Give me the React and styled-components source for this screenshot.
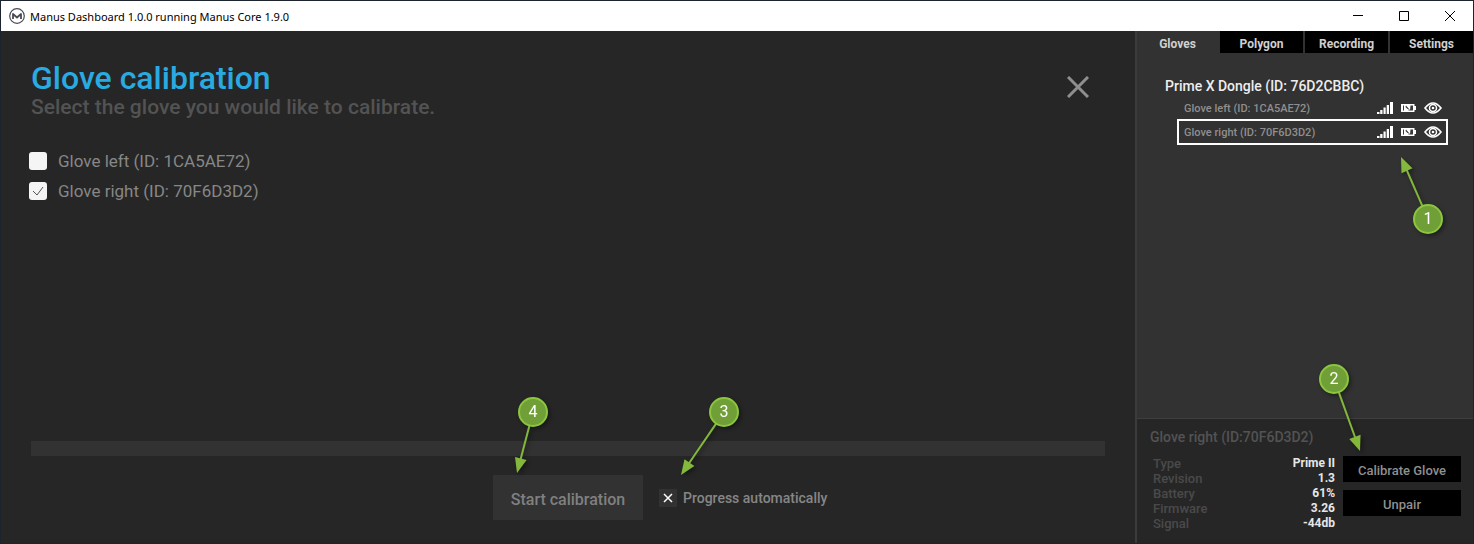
import React, { useState } from 'react'
import styled, { createGlobalStyle } from 'styled-components'

const gloves = [
  { side: 'left', id: '1CA5AE72' },
  { side: 'right', id: '70F6D3D2' },
]

const tabs = ['Gloves', 'Polygon', 'Recording', 'Settings']

const details = [
  ['Type', 'Prime II'],
  ['Revision', '1.3'],
  ['Battery', '61%'],
  ['Firmware', '3.26'],
  ['Signal', '-44db'],
]

const ManusLogo = () => (
  <svg width="16" height="16" viewBox="0 0 16 16" fill="none" stroke="#4a4a55">
    <circle cx="8" cy="8" r="7.3" strokeWidth="1.2" />
    <path d="M4 11V6L8 9.500L12 6V11" strokeWidth="1.800" strokeLinejoin="round" />
  </svg>
)

const SignalIcon = () => (
  <svg width="16" height="12" viewBox="0 0 16 12" fill="#fff">
    <path d="M0 10h2.500v2H0zM3.200 8h2.300v4H3.200zM6.500 5.500h2.200v6.500H6.500zM9.700 3h2.300v9H9.700zM13 0h3v12h-3z" />
  </svg>
)

const BatteryIcon = () => (
  <svg width="15" height="8" viewBox="0 0 15 8">
    <path d="M0 0h13.500v2H15v4h-1.500v2H0z" fill="#fff" />
    <path d="M9.500 1.500H12v5H7.500V5L9 6zM2 1.500h1v5H2zM5 1.500l3 3.500H6.500L4.500 3z" fill="#3a3a3a" />
  </svg>
)

const EyeIcon = () => (
  <svg width="18" height="12" viewBox="0 0 18 12" fill="none" stroke="#fff">
    <path d="M1 6Q9 -4 17 6Q9 16 1 6Z" strokeWidth="1.700" />
    <circle cx="9" cy="6" r="3.500" strokeWidth="1.500" />
    <circle cx="9" cy="6" r="1.300" fill="#fff" stroke="none" />
  </svg>
)

// numbered marker, the arrow goes from the circle to (dx, dy)
const Callout = ({ number, dx, dy, ...place }) => {
  const angle = (Math.atan2(dy, dx) * 180) / Math.PI
  const length = Math.hypot(dx, dy)
  return (
    <CalloutBox {...place}>
      <svg width="30" height="30" viewBox="-15 -15 30 30">
        <g transform={`rotate(${angle})`} fill="#84b83c">
          <path d={`M14 -1H${length - 13}V1H14z`} />
          <path d={`M${length} 0L${length - 15} -6V6z`} />
        </g>
        <circle r="14" fill="#719f37" stroke="#8cc63f" strokeWidth="2" />
      </svg>
      <span>{number}</span>
    </CalloutBox>
  )
}

const App = () => {
  const [tab, setTab] = useState('Gloves')
  const [picked, setPicked] = useState('right')
  const [auto, setAuto] = useState(true)

  return (
    <Window>
      <GlobalStyle />
      {/* title bar */}
      <TitleBar>
        <ManusLogo />
        <WindowTitle>Manus Dashboard 1.0.0 running Manus Core 1.9.0</WindowTitle>
        <WindowButton aria-label="Minimize">
          <svg width="10" height="10" stroke="#000"><path d="M0 4.500H10" /></svg>
        </WindowButton>
        <WindowButton aria-label="Maximize">
          <svg width="10" height="10" fill="none" stroke="#000"><path d="M.5 .5h9v9h-9z" /></svg>
        </WindowButton>
        <WindowButton aria-label="Close">
          <svg width="10" height="10" stroke="#000"><path d="M0 0L10 10M10 0L0 10" /></svg>
        </WindowButton>
      </TitleBar>

      <Body>
        {/* calibration */}
        <Main>
          <Header>
            <div>
              <Title>Glove calibration</Title>
              <SubTitle>Select the glove you would like to calibrate.</SubTitle>
            </div>
            <CloseButton aria-label="Close calibration">
              <svg width="22" height="22" stroke="#8f8f8f" strokeWidth="3"><path d="M1 1L21 21M21 1L1 21" /></svg>
            </CloseButton>
          </Header>
          <GloveChoices>
            {gloves.map((glove) => (
              <ChoiceLabel key={glove.id}>
                <CheckHolder>
                  <ChoiceBox
                    type="checkbox"
                    checked={picked === glove.side}
                    onChange={() => setPicked(glove.side)}
                  />
                  <svg width="18" height="18" fill="none" stroke="#555"><path d="M4 9L8 13L14 5" /></svg>
                </CheckHolder>
                Glove {glove.side} (ID: {glove.id})
              </ChoiceLabel>
            ))}
          </GloveChoices>
          <ProgressTrack />
          <Actions>
            <StartHolder>
              <StartButton>Start calibration</StartButton>
              <Callout number="4" left="25px" top="-78px" dx={-16} dy={61} />
            </StartHolder>
            <AutoLabel>
              <CheckHolder>
                <AutoBox type="checkbox" checked={auto} onChange={() => setAuto(!auto)} />
                <svg width="18" height="18" stroke="#fff" strokeWidth="1.500"><path d="M5 5L13 13M13 5L5 13" /></svg>
              </CheckHolder>
              Progress automatically
              <Callout number="3" left="50px" top="-92px" dx={-43} dy={63} />
            </AutoLabel>
          </Actions>
        </Main>

        {/* side panel */}
        <Side>
          <Tabs>
            {tabs.map((name) => (
              <Tab key={name} $active={tab === name} onClick={() => setTab(name)}>{name}</Tab>
            ))}
          </Tabs>
          <Devices>
            <DongleName>Prime X Dongle (ID: 76D2CBBC)</DongleName>
            {gloves.map((glove) => (
              <GloveRow key={glove.id} $selected={glove.side === 'right'}>
                <GloveName>Glove {glove.side} (ID: {glove.id})</GloveName>
                <SignalIcon />
                <BatteryIcon />
                <EyeIcon />
                {glove.side === 'right' && <Callout number="1" right="3px" top="83px" dx={-27} dy={-62} />}
              </GloveRow>
            ))}
          </Devices>
          <Details>
            <DetailsTitle>Glove right (ID:70F6D3D2)</DetailsTitle>
            <DetailsContent>
              <DetailsTable>
                <tbody>
                  {details.map(([name, value]) => (
                    <tr key={name}>
                      <th scope="row">{name}</th>
                      <td>{value}</td>
                    </tr>
                  ))}
                </tbody>
              </DetailsTable>
              <DetailsButtons>
                <SideButton>Calibrate Glove</SideButton>
                <SideButton>Unpair</SideButton>
                <Callout number="2" left="-24px" top="-92px" dx={26} dy={72} />
              </DetailsButtons>
            </DetailsContent>
          </Details>
        </Side>
      </Body>
    </Window>
  )
}

export default App

const GlobalStyle = createGlobalStyle`
* {
  box-sizing: border-box;
}
body {
  margin: 0;
  background: #262626;
  font-family: Roboto, sans-serif;
}
button {
  border: none;
  padding: 0;
  font-family: inherit;
}
svg {
  display: block;
  flex-shrink: 0;
}
`
const Window = styled.div`
display: flex;
flex-direction: column;
min-height: 100vh;
border: 1px solid #1c2430;
`
const TitleBar = styled.header`
display: flex;
align-items: center;
height: 30px;
padding-left: 8px;
background: #fff;
`
const WindowTitle = styled.span`
flex: 1;
margin-left: 5px;
font-family: "Noto Sans", sans-serif;
font-size: 11px;
color: #000;
`
const WindowButton = styled.button`
display: grid;
place-items: center;
width: 46px;
height: 30px;
background: none;
`
const Body = styled.div`
flex: 1;
display: flex;
`
const Main = styled.main`
flex: 1;
display: flex;
flex-direction: column;
padding: 30px 30px 23px;
background: #262626;
`
const Header = styled.div`
display: flex;
justify-content: space-between;
align-items: flex-start;
`
const Title = styled.h1`
margin: 0;
font-size: 32px;
line-height: 34px;
font-weight: 500;
color: #29abe2;
`
const SubTitle = styled.p`
margin: 0;
font-size: 21px;
line-height: 24px;
font-weight: 500;
color: #535353;
`
const CloseButton = styled.button`
margin: 15px 16px 0 0;
background: none;
`
const GloveChoices = styled.div`
flex: 1;
display: flex;
flex-direction: column;
gap: 12px;
padding: 33px 0;
`
const ChoiceLabel = styled.label`
display: flex;
align-items: center;
gap: 11px;
height: 18px;
margin-left: -2px;
font-size: 17px;
color: #878787;
`
const CheckHolder = styled.span`
position: relative;
display: flex;
svg {
  position: absolute;
  inset: 0;
  pointer-events: none;
}
input:not(:checked) + svg {
  display: none;
}
`
const CheckInput = styled.input`
appearance: none;
width: 18px;
height: 18px;
margin: 0;
`
const ChoiceBox = styled(CheckInput)`
border-radius: 3px;
background: #f5f5f5;
`
const AutoBox = styled(CheckInput)`
background: #323232;
`
const ProgressTrack = styled.div`
height: 15px;
margin-bottom: 19px;
background: #323232;
`
const Actions = styled.div`
display: grid;
grid-template-columns: 1fr 150px 1fr;
column-gap: 16px;
align-items: center;
`
const StartHolder = styled.div`
position: relative;
grid-column: 2;
`
const StartButton = styled.button`
width: 100%;
height: 45px;
padding-top: 3px;
background: #323232;
font-size: 16px;
font-weight: 500;
color: #808080;
`
const AutoLabel = styled.label`
position: relative;
display: flex;
align-items: center;
gap: 6px;
font-size: 14px;
font-weight: 500;
color: #868686;
`
const Side = styled.aside`
display: flex;
flex-direction: column;
width: 338px;
border-left: 2px solid #3b3b3b;
background: #323232;
`
const Tabs = styled.nav`
display: grid;
grid-template-columns: 81fr 83fr 83fr 83fr;
gap: 2px;
`
const Tab = styled.button`
height: 22px;
padding-top: 3px;
background: ${({ $active }) => ($active ? '#323232' : '#000')};
font-size: 12px;
font-weight: 700;
color: #d0d0d0;
`
const Devices = styled.section`
flex: 1;
display: flex;
flex-direction: column;
gap: 2px;
padding: 24px 27px 24px 28px;
`
const DongleName = styled.h2`
margin: 0;
font-size: 14px;
line-height: 18px;
font-weight: 500;
color: #eee;
`
const GloveRow = styled.div`
position: relative;
display: flex;
align-items: center;
gap: 8px;
height: 22px;
margin-left: 14px;
padding: 0 4px 0 5px;
outline: ${({ $selected }) => ($selected ? '2px solid #fff' : 'none')};
`
const GloveName = styled.span`
flex: 1;
font-size: 11px;
font-weight: 500;
color: #8f8f8f;
`
const Details = styled.section`
padding: 9px 12px 12px 13px;
border-top: 1px solid #3f3f3f;
background: #262626;
`
const DetailsTitle = styled.h3`
margin: 0;
font-size: 14px;
line-height: 18px;
font-weight: 500;
color: #535353;
`
const DetailsContent = styled.div`
display: flex;
gap: 8px;
padding: 10px 0 0 3px;
`
const DetailsTable = styled.table`
flex: 1;
border-collapse: collapse;
font-size: 13px;
line-height: 15px;
th, td {
  padding: 0;
}
th {
  text-align: left;
  font-weight: 500;
  color: #4a4a4a;
}
td {
  text-align: right;
  font-size: 12px;
  font-weight: 700;
  color: #e6e6e6;
}
`
const DetailsButtons = styled.div`
position: relative;
display: flex;
flex-direction: column;
gap: 8px;
width: 118px;
`
const SideButton = styled.button`
height: 26px;
padding-top: 2px;
background: #000;
font-size: 13px;
font-weight: 500;
color: #8f8f8f;
`
const CalloutBox = styled.span`
position: absolute;
top: ${({ top }) => top};
left: ${({ left }) => left || 'auto'};
right: ${({ right }) => right || 'auto'};
display: grid;
place-items: center;
filter: drop-shadow(2px 2px 2px rgba(0, 0, 0, 0.4));
font-size: 16px;
line-height: 18px;
font-weight: 400;
color: #fff;
pointer-events: none;
svg, span {
  grid-area: 1 / 1;
}
svg {
  overflow: visible;
}
span {
  z-index: 1;
}
`
